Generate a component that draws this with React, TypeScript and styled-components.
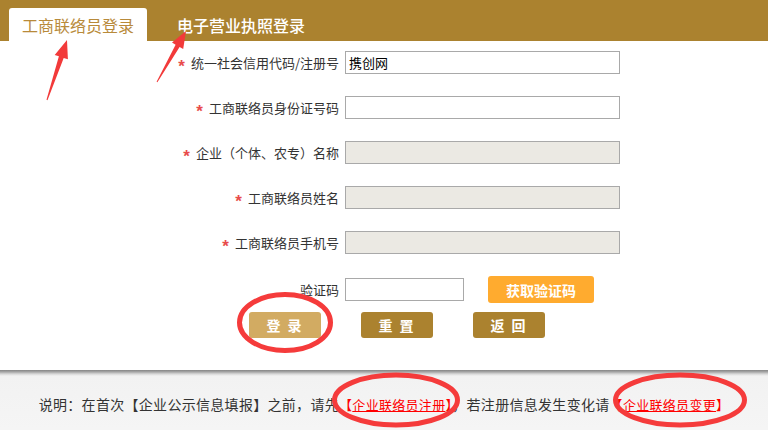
import React from "react";
import styled, { createGlobalStyle } from "styled-components";

const Global = createGlobalStyle`
  html, body { margin: 0; padding: 0; background: #fff; }
  body { font-family: "Noto Sans CJK SC", "Liberation Sans", sans-serif; color: #333; }
  * { box-sizing: border-box; }
`;

const Page = styled.div`
  position: relative;
  width: 768px;
  height: 430px;
  display: flex;
  flex-direction: column;
  overflow: hidden;
`;

const Header = styled.div`
  height: 41px;
  background: #ab822f;
  display: flex;
  align-items: flex-end;
  padding-left: 9px;
`;

const Tab = styled.div<{ $active?: boolean }>`
  height: 33px;
  padding: 0 13px;
  margin-right: ${(p) => (p.$active ? "17px" : "0")};
  display: flex;
  align-items: center;
  font-size: 16px;
  line-height: 20px;
  border-radius: 3px 3px 0 0;
  background: ${(p) => (p.$active ? "#fff" : "transparent")};
  color: ${(p) => (p.$active ? "#b88a3a" : "#fff")};
  font-weight: ${(p) => (p.$active ? 400 : 500)};
`;

const Content = styled.div`
  flex: 1;
  background: #fff;
  padding-top: 10px;
`;

const FormGrid = styled.div`
  display: grid;
  grid-template-columns: 339px auto;
  column-gap: 6px;
  row-gap: 22px;
  align-items: center;
`;

const Label = styled.label`
  text-align: right;
  font-size: 13px;
  line-height: 18px;
  color: #333;
  white-space: nowrap;
`;

const Star = styled.span`
  display: inline-block;
  color: #e84c4c;
  font-family: "Liberation Sans", sans-serif;
  font-size: 17px;
  font-weight: bold;
  line-height: 10px;
  margin-right: 6px;
  transform: translateY(4px);
`;

const Input = styled.input<{ $w?: number }>`
  width: ${(p) => p.$w ?? 275}px;
  height: 23px;
  border: 1px solid #a9a9a9;
  padding: 0 3px;
  font-family: "Noto Sans CJK SC", sans-serif;
  font-size: 13px;
  color: #000;
  background: ${(p) => (p.readOnly ? "#ebe9e3" : "#fff")};
  outline: none;
  margin: 0;
`;

const CaptchaCell = styled.div`
  display: flex;
  align-items: center;
  gap: 24px;
`;

const Btn = styled.button<{ $bg: string; $w: number; $h: number }>`
  width: ${(p) => p.$w}px;
  height: ${(p) => p.$h}px;
  background: ${(p) => p.$bg};
  border: none;
  border-radius: 3px;
  color: #fff;
  font-family: "Noto Sans CJK SC", sans-serif;
  font-size: 14px;
  font-weight: bold;
  letter-spacing: ${(p) => (p.$w === 72 ? "2px" : "0")};
  padding: 0;
  display: flex;
  align-items: center;
  justify-content: center;
`;

const ButtonRow = styled.div`
  display: flex;
  gap: 40px;
  margin-top: 9px;
  margin-left: 249px;
`;

const Footer = styled.div`
  height: 60px;
  background: linear-gradient(#858585 0px, #a8a8a8 2px, #d8d8d8 4px, #f2f2f2 6px, #f5f5f5 100%);
  padding-top: 24px;
  text-align: center;
  font-size: 14px;
  line-height: 20px;
  letter-spacing: 0.3px;
  color: #333;
  white-space: nowrap;
`;

const Red = styled.span`
  color: #f00;
  font-size: 13px;
`;

const Link = styled.a`
  color: #f00;
  text-decoration: underline;
  font-size: 13px;
`;

const Overlay = styled.svg`
  position: absolute;
  left: 0;
  top: 0;
  pointer-events: none;
`;

const fields: { label: string; value?: string; readOnly?: boolean }[] = [
  { label: "统一社会信用代码/注册号", value: "携创网" },
  { label: "工商联络员身份证号码" },
  { label: "企业（个体、农专）名称", readOnly: true },
  { label: "工商联络员姓名", readOnly: true },
  { label: "工商联络员手机号", readOnly: true },
];

export default function App() {
  return (
    <>
      <Global />
      <Page>
        <Header>
          <Tab $active>工商联络员登录</Tab>
          <Tab>电子营业执照登录</Tab>
        </Header>
        <Content>
          <FormGrid>
            {fields.map((f) => (
              <React.Fragment key={f.label}>
                <Label>
                  <Star>*</Star>
                  {f.label}
                </Label>
                <Input readOnly={f.readOnly} defaultValue={f.value ?? ""} />
              </React.Fragment>
            ))}
            <Label>验证码</Label>
            <CaptchaCell>
              <Input $w={119} defaultValue="" />
              <Btn $bg="#ffab2f" $w={106} $h={27}>获取验证码</Btn>
            </CaptchaCell>
          </FormGrid>
          <ButtonRow>
            <Btn $bg="#d2ab62" $w={72} $h={26}>登 录</Btn>
            <Btn $bg="#ab822f" $w={72} $h={26}>重 置</Btn>
            <Btn $bg="#ab822f" $w={72} $h={26}>返 回</Btn>
          </ButtonRow>
        </Content>
        <Footer>
          说明：在首次【企业公示信息填报】之前，请先
          <Red>【</Red>
          <Link>企业联络员注册</Link>
          <Red>】</Red>
          ，若注册信息发生变化请
          <Red>【</Red>
          <Link>企业联络员变更</Link>
          <Red>】</Red>
        </Footer>
        <Overlay width="768" height="430" viewBox="0 0 768 430">
          <g fill="#f23a3a">
            <polygon points="67,40 67.9,59.3 63.7,57.9 47.5,100.2 46.5,99.8 58.9,56.3 54.7,54.9" />
            <polygon points="186,31 183.2,49 179.6,46.9 157.4,82.2 156.6,81.8 175.6,44.7 172,42.6" />
          </g>
          <g fill="none" stroke="#f53b3b" strokeWidth="5">
            <ellipse cx="285" cy="322.5" rx="45.5" ry="28" />
            <ellipse cx="396" cy="400" rx="61.5" ry="25" />
            <ellipse cx="680" cy="400" rx="64.5" ry="25" />
          </g>
        </Overlay>
      </Page>
    </>
  );
}
